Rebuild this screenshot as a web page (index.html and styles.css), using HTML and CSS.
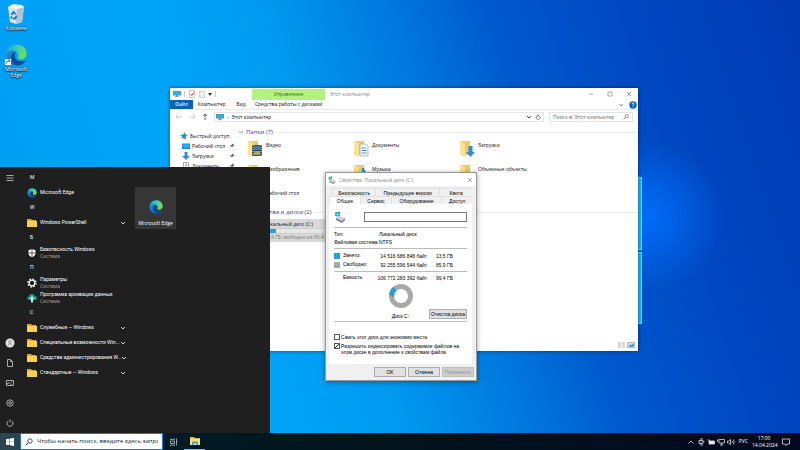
FILE: index.html
```html
<!DOCTYPE html>
<html lang="ru">
<head>
    <meta charset="UTF-8">
    <meta name="viewport" content="width=device-width, initial-scale=1.0">
    <title>Рабочий стол</title>
    <link rel="stylesheet" href="styles.css">
</head>
<body>
    <!-- shared icons -->
    <svg class="sprite" aria-hidden="true">
        <defs>
            <linearGradient id="edge-top" x1="0" y1="0" x2="1" y2="0.3">
                <stop offset="0" stop-color="#1ba0df"/>
                <stop offset="0.5" stop-color="#33c5c8"/>
                <stop offset="1" stop-color="#68df56"/>
            </linearGradient>
            <linearGradient id="edge-bottom" x1="0" y1="0" x2="1" y2="1">
                <stop offset="0" stop-color="#1f95e0"/>
                <stop offset="1" stop-color="#0c4fa3"/>
            </linearGradient>
        </defs>
        <symbol id="edge" viewBox="0 0 24 24">
            <path fill="url(#edge-bottom)" d="M1 11C1 18 6 23.500 13 23.500c4.500 0 8-2.500 9.700-5.500-4 2-11 1.500-12-4-.5-3 1-5 1.500-5.500C9 5 2 6 1 11z"/>
            <path fill="#0a4a98" d="M8 10c-3 6 1 13 7.500 13.200 3.200-.7 5.700-2.700 7.200-5.200-4 2-11 1.500-12-4-.4-2 .3-3.600 1-4.700z"/>
            <path fill="url(#edge-top)" d="M1 11C2 4 7 .5 12.500.500 19 .5 23.500 5 23.500 10.500c0 4-3 6-6.500 6-2.500 0-3.500-1-3-1.800 1.500-2 .8-5.700-3-7.200C6.500 6 2 8 1 11z"/>
        </symbol>
        <symbol id="folder" viewBox="0 0 10 8">
            <path fill="#e8a80c" d="M0 0h4l1 1h4v7H0z"/>
            <path fill="#ffd04d" d="M0 2h10v6H0z"/>
        </symbol>
        <symbol id="big-folder" viewBox="0 0 18 18">
            <path fill="#efcb66" d="M2 1h10v14H2z"/>
            <path fill="#fbe392" d="M2 1l5 2v14l-5-2z"/>
        </symbol>
        <symbol id="chevron" viewBox="0 0 6 6">
            <path fill="none" stroke="currentColor" stroke-width="0.800" d="M1 2l2 2 2-2"/>
        </symbol>
        <symbol id="close" viewBox="0 0 6 6">
            <path fill="none" stroke="currentColor" stroke-width="0.700" d="M1 1l4 4M5 1L1 5"/>
        </symbol>
        <symbol id="monitor" viewBox="0 0 10 8">
            <path fill="#6d8ca4" d="M0 0h10v6H6v1h2v1H2V7h2V6H0z"/>
            <path fill="#27b1f3" d="M1 1h8v4H1z"/>
        </symbol>
        <symbol id="drive" viewBox="0 0 12 12">
            <path fill="#00a4df" d="M1 1.500l2-.4v2H1zM3.400 1L6 .5v2.600H3.400zM1 3.500h2v2l-2-.4zM3.400 3.500H6v2.600l-2.600-.5z"/>
            <path fill="#d3d6d8" d="M2 7l3-2 6 2-3 3z"/>
            <path fill="#7a8084" d="M2 7l6 3v2L2 9zM8 10l3-3v2l-3 3z"/>
        </symbol>
        <symbol id="search" viewBox="0 0 8 8">
            <circle cx="5" cy="3" r="2.200" fill="none" stroke="currentColor" stroke-width="0.800"/>
            <path stroke="currentColor" stroke-width="0.900" d="M3.400 4.600L.8 7.200"/>
        </symbol>
        <symbol id="pin" viewBox="0 0 6 6">
            <path fill="#666" d="M3.500.5l2 2-1.500.500-.5 1.500-1-1L.6 5.400l1.400-2-1-1L2.600 2z"/>
        </symbol>
        <symbol id="down" viewBox="0 0 8 8">
            <path fill="#2f8ddb" d="M2.500 0h3v4H8L4 8 0 4h2.500z"/>
        </symbol>
        <symbol id="gear" viewBox="0 0 10 10">
            <circle cx="5" cy="5" r="2.800" fill="none" stroke="currentColor" stroke-width="1.200"/>
            <circle cx="5" cy="5" r="4" fill="none" stroke="currentColor" stroke-width="1.300" stroke-dasharray="1.600 1.540"/>
        </symbol>
    </svg>

    <main class="desktop">
        <div class="wall-logo"><span></span><span></span><span></span><span></span></div>

        <nav class="shortcuts">
            <a href="#bin" class="shortcut">
                <svg class="shortcut-icon" viewBox="0 0 22 22">
                    <path fill="#d9e4ea" d="M3 4l12-2 4 2-2 15-6 2-6-2z"/>
                    <path fill="#b3c4cf" d="M12 6l7-2-2 15-6 2z"/>
                    <path fill="#f5fafc" d="M3 4l5-3 9 1 2 2-7 2z"/>
                    <path fill="none" stroke="#1478c8" stroke-width="1.800" d="M6.500 12l2-3 2 2M11.500 12.500l-1 3H8M7 15.500l-1-2"/>
                </svg>
                <span>Корзина</span>
            </a>
            <a href="#edge" class="shortcut">
                <svg class="shortcut-icon" viewBox="0 0 22 22">
                    <use href="#edge" width="22" height="22"/>
                    <path fill="#fff" d="M0 15h6v6H0z"/>
                    <path fill="none" stroke="#1464b4" d="M1.500 19.500c0-2 1-2.500 3-2.500M3 16h1.600v2"/>
                </svg>
                <span>Microsoft Edge</span>
            </a>
        </nav>

        <section class="explorer" aria-label="Этот компьютер">
            <header class="ex-title">
                <div class="quick-access">
                    <svg class="i8" viewBox="0 0 10 10"><use href="#monitor" y="1" width="10" height="8"/></svg>
                    <i class="sep"></i>
                    <svg class="i8" viewBox="0 0 8 8"><path fill="#fff" stroke="#a9a9a9" stroke-width="0.600" d="M1.500.5h5v7h-5z"/><path fill="none" stroke="#d33" d="M2.500 4l1.200 1.500L6 2.500"/></svg>
                    <svg class="i8" viewBox="0 0 8 8"><path fill="#eee" stroke="#bbb" stroke-width="0.600" d="M1.500 1.500h5v6h-5z"/></svg>
                    <svg class="i4" viewBox="0 0 4 4"><path fill="#333" d="M0 1h4L2 4z"/></svg>
                    <i class="sep"></i>
                </div>
                <span class="context-tab">Управление</span>
                <span class="ex-name">Этот компьютер</span>
                <div class="win-buttons">
                    <button aria-label="Свернуть"><svg viewBox="0 0 6 6"><path stroke="#888" stroke-width="0.700" d="M1 3h4"/></svg></button>
                    <button aria-label="Развернуть"><svg viewBox="0 0 6 6"><path fill="none" stroke="#888" stroke-width="0.700" d="M1 1h4v4H1z"/></svg></button>
                    <button aria-label="Закрыть"><svg><use href="#close"/></svg></button>
                </div>
            </header>
            <nav class="ribbon">
                <a href="#file" class="file">Файл</a>
                <a href="#computer" class="tab-computer">Компьютер</a>
                <a href="#view" class="tab-view">Вид</a>
                <a href="#tools" class="tab-tools">Средства работы с дисками</a>
                <svg class="i6 ribbon-toggle"><use href="#chevron"/></svg>
                <svg class="i8" viewBox="0 0 8 8"><circle cx="4" cy="4" r="3.700" fill="#0560b0"/><path fill="none" stroke="#fff" stroke-width="0.900" d="M2.800 3c.2-1.500 2.500-1.300 2.300 0-.1.800-1.100.800-1.100 1.800M4 5.500v.9"/></svg>
            </nav>
            <div class="address-row">
                <div class="arrows">
                    <svg class="i8 off" viewBox="0 0 8 8"><path d="M7 4H1l2-2M1 4l2 2"/></svg>
                    <svg class="i8 off" viewBox="0 0 8 8"><path d="M1 4h6L5 2M7 4L5 6"/></svg>
                    <svg class="i8" viewBox="0 0 8 8"><path d="M4 7V1L2 3M4 1l2 2"/></svg>
                </div>
                <div class="address">
                    <svg class="i8" viewBox="0 0 10 8"><use href="#monitor" width="10" height="8"/></svg>
                    <span class="crumb">›</span>
                    <span>Этот компьютер</span>
                    <svg class="i6 push"><use href="#chevron"/></svg>
                    <svg class="i6" viewBox="0 0 6 6"><path fill="none" stroke="#444" stroke-width="0.700" d="M4.500 2A2 2 0 1 1 2 1.700M2 .5L3.500 1.500 2 2.700"/></svg>
                </div>
                <label class="ex-search">
                    <input type="text" placeholder="Поиск в: Этот компьютер" aria-label="Поиск">
                    <svg class="i6"><use href="#search"/></svg>
                </label>
            </div>
            <div class="ex-body">
                <ul class="tree">
                    <li><svg class="i8" viewBox="0 0 8 8"><path fill="#258be0" d="M4.500 0l.8 2.600L8 3 5.800 4.600 6 8 3.900 6 1.500 7l.7-2.500L0 3l3-.3z"/></svg><span>Быстрый доступ</span></li>
                    <li class="sub"><svg class="i8" viewBox="0 0 8 8"><path fill="#1689dc" d="M0 1.500h8v5.500H0z"/><path fill="#38adf5" d="M1 2.500h6v3H1z"/></svg><span>Рабочий стол</span><svg class="i6 push"><use href="#pin"/></svg></li>
                    <li class="sub"><svg class="i8"><use href="#down"/></svg><span>Загрузки</span><svg class="i6 push"><use href="#pin"/></svg></li>
                    <li class="sub"><svg class="i8" viewBox="0 0 8 8"><path fill="#fff" stroke="#6f8697" stroke-width="0.700" d="M1.500.5h5v7h-5zM3 2.500h2M3 4h2M3 5.500h2"/></svg><span>Документы</span><svg class="i6 push"><use href="#pin"/></svg></li>
                </ul>
                <div class="content">
                    <h2><svg class="i6"><use href="#chevron"/></svg>Папки (7)</h2>
                    <ul class="folders">
                        <li><svg class="i18" viewBox="0 0 18 18"><use href="#big-folder"/><path fill="#43464b" d="M6 5h10v11H6z"/><path fill="#4377bb" d="M8 6h6v4H8z"/><path fill="#9aa86b" d="M8 11h6v4H8z"/><path stroke="#ddd" stroke-dasharray="1 1" d="M7 5v11M15 5v11"/></svg><span>Видео</span></li>
                        <li><svg class="i18" viewBox="0 0 18 18"><use href="#big-folder"/><path fill="#f3f8fb" stroke="#8fa3b0" stroke-width="0.700" d="M8 4h6l2 2v10H8z"/><path stroke="#4a90c8" d="M9.500 8h4M9.500 10.500h5M9.500 13h5"/></svg><span>Документы</span></li>
                        <li><svg class="i18" viewBox="0 0 18 18"><use href="#big-folder"/><path fill="#2f8ddb" d="M10.500 6h4v6H17l-4.500 5L8 12h2.500z"/></svg><span>Загрузки</span></li>
                        <li><svg class="i18" viewBox="0 0 18 18"><use href="#big-folder"/><path fill="#5fb2e5" d="M7 7h9v8H7z"/></svg><span>Изображения</span></li>
                        <li><svg class="i18" viewBox="0 0 18 18"><use href="#big-folder"/><path fill="#0b94d8" d="M10 4h2c0 3 4 4 3 8-1-2-2-2-3-2v5h-2z"/></svg><span>Музыка</span></li>
                        <li><svg class="i18" viewBox="0 0 18 18"><use href="#big-folder"/><path fill="#35aee0" d="M12 8l4 2v4l-4 2-4-2v-4z"/></svg><span>Объемные объекты</span></li>
                        <li><svg class="i18" viewBox="0 0 18 18"><use href="#big-folder"/></svg><span>Рабочий стол</span></li>
                    </ul>
                    <h2><svg class="i6"><use href="#chevron"/></svg>Устройства и диски (2)</h2>
                    <div class="disk">
                        <svg class="i18"><use href="#drive"/></svg>
                        <div class="disk-info">
                            <span>Локальный диск (C:)</span>
                            <div class="disk-bar"><div style="width: 14%"></div></div>
                            <span class="muted">85,9 ГБ свободно из 99,4 ГБ</span>
                        </div>
                    </div>
                </div>
            </div>
            <footer class="ex-status">
                <svg class="i8" viewBox="0 0 8 8"><path stroke="#999" stroke-width="0.800" stroke-dasharray="3 1" d="M0 2h8M0 4h8M0 6h8"/></svg>
                <svg class="i8" viewBox="0 0 8 8"><path fill="#cde6f7" stroke="#6ea7cf" stroke-width="0.700" d="M.5 1.500h7v5h-7z"/><path fill="#2873a8" d="M1.500 5.500l2-2 1 1 2-2v3z"/></svg>
            </footer>
        </section>

        <section class="dialog" aria-label="Свойства">
            <header class="dlg-title">
                <svg class="i8" viewBox="0 0 12 12"><use href="#drive"/></svg>
                <span>Свойства: Локальный диск (C:)</span>
                <button aria-label="Закрыть"><svg class="i6"><use href="#close"/></svg></button>
            </header>
            <div class="tabs">
                <div class="tab-row back">
                    <button class="grow-4">Безопасность</button>
                    <button class="grow-6">Предыдущие версии</button>
                    <button class="grow-3">Квота</button>
                </div>
                <div class="tab-row">
                    <button class="active">Общие</button>
                    <button class="grow-3">Сервис</button>
                    <button class="grow-5">Оборудование</button>
                    <button class="grow-3">Доступ</button>
                </div>
            </div>
            <div class="panel">
                <div class="volume">
                    <svg class="i12"><use href="#drive"/></svg>
                    <input type="text" aria-label="Метка тома">
                </div>
                <dl class="facts">
                    <dt>Тип:</dt><dd>Локальный диск</dd>
                    <dt>Файловая система:</dt><dd>NTFS</dd>
                </dl>
                <table class="space">
                    <tr><th><i class="used"></i>Занято:</th><td>14 516 686 848 байт</td><td>13,5 ГБ</td></tr>
                    <tr><th><i class="free"></i>Свободно:</th><td>92 255 596 544 байт</td><td>85,9 ГБ</td></tr>
                </table>
                <table class="space total">
                    <tr><th><i></i>Емкость:</th><td>106 772 283 392 байт</td><td>99,4 ГБ</td></tr>
                </table>
                <div class="chart">
                    <figure>
                        <svg class="donut" viewBox="0 0 24 24">
                            <circle cx="12" cy="12" r="9.500" fill="none" stroke="#a8a8a8" stroke-width="5"/>
                            <circle cx="12" cy="12" r="9.500" fill="none" stroke="#26a0da" stroke-width="5" pathLength="100" stroke-dasharray="14 86" stroke-dashoffset="-50"/>
                        </svg>
                        <figcaption>Диск C:</figcaption>
                    </figure>
                    <button class="btn">Очистка диска</button>
                </div>
                <div class="options">
                    <label><input type="checkbox"><span>Сжать этот диск для экономии места</span></label>
                    <label><input type="checkbox" checked><span>Разрешить индексировать содержимое файлов на этом диске в дополнение к свойствам файла</span></label>
                </div>
            </div>
            <footer class="dlg-buttons">
                <button class="btn">OK</button>
                <button class="btn">Отмена</button>
                <button class="btn" disabled>Применить</button>
            </footer>
        </section>

        <section class="start-menu" aria-label="Пуск">
            <nav class="rail">
                <button class="burger" aria-label="Меню"><svg class="i8" viewBox="0 0 8 8"><path d="M.5 1.500h7M.5 4h7M.5 6.500h7"/></svg></button>
                <button aria-label="Пользователь"><svg class="i10" viewBox="0 0 10 10"><circle cx="5" cy="5" r="4.500" fill="#e6e6e6" stroke="none"/><circle cx="5" cy="4" r="1.500" stroke="#888"/><path stroke="#888" d="M2.800 8c.3-3 4.100-3 4.400 0"/></svg></button>
                <button aria-label="Документы"><svg class="i8" viewBox="0 0 8 8"><path d="M1.500.5h3l2 2v5h-5zM4.500.5v2h2"/></svg></button>
                <button aria-label="Изображения"><svg class="i8" viewBox="0 0 8 8"><path d="M.5 1.500h7v5h-7zM.5 5.500L3 3.500l3 3"/><path d="M5 3h1"/></svg></button>
                <button aria-label="Параметры"><svg class="i8" viewBox="0 0 8 8"><circle cx="4" cy="4" r="3.200"/><circle cx="4" cy="4" r="1.300"/></svg></button>
                <button aria-label="Выключение"><svg class="i8" viewBox="0 0 8 8"><path d="M2.300 1.800a3 3 0 1 0 3.400 0M4 .5v3"/></svg></button>
            </nav>
            <ul class="apps">
                <li class="letter">M</li>
                <li><svg class="i10"><use href="#edge"/></svg><span>Microsoft Edge</span></li>
                <li class="letter">W</li>
                <li><svg class="i10"><use href="#folder"/></svg><span>Windows PowerShell</span><svg class="i6 push"><use href="#chevron"/></svg></li>
                <li class="letter">Б</li>
                <li><svg class="i10" viewBox="0 0 10 10"><path fill="#fff" d="M5 1l3.500 1.200V5c0 2-1.500 3.500-3.500 4.300C3 8.500 1.500 7 1.500 5V2.200z"/><path stroke="#1f1f1f" stroke-width="0.700" d="M5 1v8M1.500 5h7"/></svg><span>Безопасность Windows<small>Система</small></span></li>
                <li class="letter">П</li>
                <li><svg class="i10"><use href="#gear"/></svg><span>Параметры<small>Система</small></span></li>
                <li><svg class="i10" viewBox="0 0 10 10"><path fill="#16a58a" d="M2.500 7C-.5 7-.2 3.700 2 3.500 2.500.5 7 .2 7.800 3.200 10.500 3.200 10.500 7 8 7z"/><path fill="#b9f3e4" d="M5 3l2.500 3H6v3.500H4V6H2.500z"/></svg><span>Программа архивации данных<small>Система</small></span></li>
                <li class="letter">С</li>
                <li><svg class="i10"><use href="#folder"/></svg><span>Служебные — Windows</span><svg class="i6 push"><use href="#chevron"/></svg></li>
                <li><svg class="i10"><use href="#folder"/></svg><span>Специальные возможности Win...</span><svg class="i6 push"><use href="#chevron"/></svg></li>
                <li><svg class="i10"><use href="#folder"/></svg><span>Средства администрирования W...</span><svg class="i6 push"><use href="#chevron"/></svg></li>
                <li><svg class="i10"><use href="#folder"/></svg><span>Стандартные — Windows</span><svg class="i6 push"><use href="#chevron"/></svg></li>
            </ul>
            <div class="tiles">
                <a href="#edge" class="tile">
                    <svg><use href="#edge"/></svg>
                    <span>Microsoft Edge</span>
                </a>
            </div>
        </section>
    </main>

    <footer class="taskbar">
        <button class="start" aria-label="Пуск"><svg class="i8" viewBox="0 0 8 8"><path fill="#fff" d="M0 1.200L3.600.7v3H0zM4 .6L8 0v3.700H4zM0 4.100h3.600v3L0 6.700zM4 4.100h4V8l-4-.7z"/></svg></button>
        <label class="task-search">
            <svg class="i8"><use href="#search"/></svg>
            <input type="text" placeholder="Чтобы начать поиск, введите здесь запрос" aria-label="Поиск">
        </label>
        <button class="task" aria-label="Представление задач"><svg class="i8" viewBox="0 0 8 8"><path fill="none" stroke="#a9c4c9" stroke-width="0.800" d="M.5.500v1h4v-1M.5 3h4v2.500h-4zM.5 8V7h4v1M6.500.5v7M6 3.500h1.500"/></svg></button>
        <button class="task open" aria-label="Проводник"><svg class="i10" viewBox="0 0 10 10"><path fill="#e9b93a" d="M0 1h4l1 1h5v7H0z"/><path fill="#ffe07c" d="M0 3h10v6H0z"/><path fill="#3aa0df" d="M2 5.500h6V9H6.500V7.500h-3V9H2z"/></svg></button>
        <div class="tray">
            <svg class="i8" viewBox="0 0 8 8"><path d="M1.500 5.500L4 3l2.500 2.500"/></svg>
            <svg class="i8" viewBox="0 0 8 8"><path d="M2 2.500h4v3H2zM3 1h3M3 7h3M4 3.500v1M6 3.500h1.500"/></svg>
            <svg class="i8" viewBox="0 0 8 8"><path fill="#eee" d="M2 3h5.500v3H2z"/><path d="M.5 2h2v2"/></svg>
            <svg class="i8" viewBox="0 0 8 8"><path d="M2 1.500h5.500V5H2zM4.500 5v2M3 7h3M.5 1.500V4"/></svg>
            <svg class="i8" viewBox="0 0 8 8"><path d="M.5 3h1L3.500 1.500v5L1.500 5h-1zM5 3q.8 1 0 2M6.300 1.500q2 2.500 0 5"/></svg>
            <span class="lang">РУС</span>
            <time class="clock">17:00<br>14.04.2024</time>
            <svg class="i8" viewBox="0 0 8 8"><path d="M.5 1h7v5H5L4 7.500 3 6H.5z"/></svg>
        </div>
    </footer>
</body>
</html>
```

FILE: styles.css
```css
* {
    box-sizing: border-box;
}

body {
    margin: 0;
    height: 100vh;
    display: flex;
    flex-direction: column;
    overflow: hidden;
    font-family: "Open Sans", "Noto Sans", sans-serif;
    font-size: 5px;
    line-height: 7px;
    color: #111;
}

ul, dl, dd, figure, h2 {
    margin: 0;
    padding: 0;
    list-style: none;
}

button, input {
    font: inherit;
    color: inherit;
    margin: 0;
    padding: 0;
    border: 0;
    background: none;
}

button {
    display: flex;
    align-items: center;
    justify-content: center;
}

a {
    color: inherit;
    text-decoration: none;
}

svg {
    display: block;
    flex: none;
}

.sprite {
    position: absolute;
    width: 0;
    height: 0;
}

.i4 { width: 4px; height: 4px; }
.i6 { width: 6px; height: 6px; }
.i8 { width: 8px; height: 8px; }
.i10 { width: 10px; height: 10px; }
.i12 { width: 12px; height: 12px; }
.i18 { width: 18px; height: 18px; }

.push {
    margin-left: auto;
}

/* desktop */
.desktop {
    flex: 1;
    min-height: 0;
    position: relative;
    background:
        radial-gradient(circle at 81% 50%, rgba(0, 112, 255, 0.9), rgba(0, 100, 245, 0) 75px),
        linear-gradient(72deg, #009cf2 0%, #00a5f9 30%, #0099f0 43%, #0076dc 57%, #0058cc 67%, #0046c0 83%, #003ab2 100%);
}

.wall-logo {
    position: absolute;
    top: 177px;
    right: 158px;
    width: 150px;
    height: 147px;
    display: grid;
    grid-template-columns: 1fr 1fr;
    gap: 2px;
}

.wall-logo span {
    background: #18b4ff;
    border: 1px solid #5ee0ff;
}

.shortcuts {
    position: absolute;
    top: 3px;
    left: 1px;
    width: 30px;
    display: flex;
    flex-direction: column;
    gap: 13px;
}

.shortcut {
    display: flex;
    flex-direction: column;
    align-items: center;
    text-align: center;
    line-height: 6px;
    color: #fff;
    text-shadow: 0 1px 1px #000, 0 0 2px #000;
}

.shortcut-icon {
    width: 22px;
    height: 22px;
}

/* explorer window */
.explorer {
    position: absolute;
    top: 88px;
    right: 162px;
    bottom: 82px;
    left: 170px;
    display: flex;
    flex-direction: column;
    background: #fff;
    box-shadow: 0 0 4px rgba(0, 0, 0, 0.5);
}

.ex-title {
    display: flex;
    height: 12px;
}

.quick-access {
    width: 82px;
    display: flex;
    align-items: center;
    gap: 2px;
    padding-left: 3px;
}

.sep {
    width: 1px;
    height: 6px;
    margin: 0 1px;
    background: #ccc;
}

.context-tab {
    width: 73px;
    margin-top: 1px;
    line-height: 11px;
    text-align: center;
    background: #b5f085;
    color: #3e6b2b;
}

.ex-name {
    padding-left: 5px;
    line-height: 12px;
    color: #888;
}

.win-buttons {
    margin-left: auto;
    display: flex;
    color: #777;
}

.win-buttons button {
    width: 19px;
}

.win-buttons svg {
    width: 6px;
    height: 6px;
}

.ribbon {
    display: flex;
    align-items: center;
    height: 10px;
    line-height: 9px;
    border-bottom: 1px solid #e8e8e8;
}

.file {
    width: 23px;
    text-align: center;
    background: #0a63b1;
    color: #fff;
}

.tab-computer {
    width: 37px;
    text-align: center;
}

.tab-view {
    width: 22px;
    text-align: center;
}

.tab-tools {
    width: 73px;
    text-align: center;
    white-space: nowrap;
    background: #fafafa;
}

.ribbon-toggle {
    margin-left: auto;
    margin-right: 5px;
    color: #777;
}

.ribbon svg:last-child {
    margin-right: 1px;
}

.address-row {
    display: flex;
    align-items: center;
    gap: 5px;
    height: 14px;
    padding: 2px 5px;
}

.arrows {
    display: flex;
    gap: 5px;
}

.arrows svg {
    fill: none;
    stroke: #444;
    stroke-width: 0.8;
}

.arrows .off {
    stroke: #c4c4c4;
}

.address {
    flex: 1;
    height: 10px;
    display: flex;
    align-items: center;
    gap: 3px;
    padding: 0 2px 0 1px;
    border: 1px solid #e4e4e4;
}

.ex-search {
    width: 84px;
    height: 10px;
    display: flex;
    align-items: center;
    padding: 0 3px;
    border: 1px solid #e4e4e4;
    color: #555;
}

.ex-search input {
    flex: 1;
    min-width: 0;
}

input::placeholder {
    color: #666;
    opacity: 1;
}

.ex-body {
    flex: 1;
    min-height: 0;
    display: flex;
}

.tree {
    width: 68px;
    padding: 7px 3px 0 10px;
}

.tree li {
    display: flex;
    align-items: center;
    gap: 2px;
    height: 10px;
    white-space: nowrap;
}

.tree .sub {
    padding-left: 2px;
}

.content {
    flex: 1;
    min-width: 0;
    padding-top: 1px;
    overflow: hidden;
}

.content h2 {
    display: flex;
    align-items: center;
    gap: 2px;
    height: 14px;
    font-size: 6px;
    font-weight: normal;
    color: #2a4687;
    white-space: nowrap;
}

.content h2::after {
    content: "";
    flex: 1;
    height: 1px;
    background: #ececec;
}

.content h2 svg {
    color: #888;
}

.folders {
    display: grid;
    grid-template-columns: repeat(auto-fill, 106px);
    grid-template-rows: 24px 24px 17px;
    padding: 1px 0 0 8px;
}

.folders li {
    display: flex;
    gap: 2px;
    white-space: nowrap;
}

.folders span {
    padding-top: 2px;
}

.disk {
    width: 100px;
    height: 23px;
    margin-left: 6px;
    display: flex;
    gap: 2px;
    align-items: center;
    background: #d9d9d9;
    white-space: nowrap;
}

.disk-info {
    flex: 1;
    min-width: 0;
}

.disk-info span {
    display: block;
}

.disk-bar {
    height: 6px;
    background: #e6e6e6;
    border: 1px solid #ccc;
}

.disk-bar div {
    height: 100%;
    background: #26a0da;
}

.muted {
    color: #777;
}

.ex-status {
    height: 12px;
    display: flex;
    align-items: center;
    justify-content: flex-end;
    gap: 1px;
    padding-right: 3px;
}

/* disk properties dialog */
.dialog {
    position: absolute;
    top: 173px;
    left: 326px;
    width: 150px;
    background: #f0f0f0;
    box-shadow: 0 0 0 1px #999, 0 1px 5px 1px rgba(0, 0, 0, 0.4);
    font-family: "Liberation Sans", Arial, sans-serif;
    line-height: 6px;
    color: #000;
}

.dlg-title {
    display: flex;
    align-items: center;
    gap: 3px;
    height: 13px;
    padding: 0 3px 0 2px;
    background: #fff;
    font-family: "Open Sans", "Noto Sans", sans-serif;
    color: #888;
}

.dlg-title button {
    margin-left: auto;
}

.tabs {
    padding: 2px 4px 0 3px;
}

.tab-row {
    display: flex;
}

.tab-row.back {
    padding: 0 0 0 3px;
}

.tab-row button {
    height: 8px;
    border: 1px solid #e0e0e0;
    border-bottom: 0;
    border-right: 0;
    white-space: nowrap;
}

.tab-row button.active {
    width: 31px;
    background: #fff;
}

.grow-3 { flex: 3 1 0; }
.grow-4 { flex: 4 1 0; }
.grow-5 { flex: 5 1 0; }
.grow-6 { flex: 6 1 0; }

.panel {
    margin: 0 4px 0 3px;
    padding: 7px 5px 9px;
    background: #fff;
}

.volume {
    display: flex;
    align-items: center;
    justify-content: space-between;
    padding-bottom: 4px;
    border-bottom: 1px solid #bbb;
}

.volume input {
    width: 103px;
    height: 10px;
    border: 1px solid #777;
}

.facts {
    display: grid;
    grid-template-columns: 45px 1fr;
    grid-auto-rows: 8px;
    align-items: center;
    padding: 2px 0;
    border-bottom: 1px solid #bbb;
    white-space: nowrap;
}

.space {
    width: 100%;
    padding: 2px 0;
    border-spacing: 0;
    border-bottom: 1px solid #bbb;
    white-space: nowrap;
}

.space th, .space td {
    height: 9px;
    padding: 0;
}

.space th {
    width: 43px;
    font-weight: normal;
    text-align: left;
}

.space td {
    width: 50px;
    text-align: right;
}

.space td:last-child {
    width: auto;
    padding-right: 14px;
}

.space i {
    display: inline-block;
    width: 6px;
    height: 6px;
    margin-right: 3px;
    vertical-align: middle;
}

.used { background: #26a0da; }
.free { background: #a8a8a8; }

.total {
    padding: 1px 0;
    border-bottom: 0;
}

.chart {
    display: grid;
    grid-template-columns: 1fr auto 1fr;
    align-items: end;
    padding: 1px 0 2px;
    border-bottom: 1px solid #bbb;
}

.chart figure {
    grid-column: 2;
    text-align: center;
}

.donut {
    width: 24px;
    height: 24px;
}

.chart figcaption {
    padding-top: 5px;
}

.chart .btn {
    justify-self: end;
    width: 38px;
}

.btn {
    width: 32px;
    height: 10px;
    background: #e1e1e1;
    border: 1px solid #adadad;
    white-space: nowrap;
}

.btn:disabled {
    background: #ccc;
    border-color: #bfbfbf;
    color: #999;
}

.options {
    display: flex;
    flex-direction: column;
    gap: 3px;
    padding-top: 12px;
}

.options label {
    display: flex;
    gap: 1px;
}

.options input {
    appearance: none;
    flex: none;
    width: 6px;
    height: 6px;
    border: 1px solid #555;
    background: #fff;
}

.options input:checked {
    background: linear-gradient(135deg, #fff 40%, #333 40%, #333 60%, #fff 60%);
}

.dlg-buttons {
    display: flex;
    justify-content: flex-end;
    gap: 2px;
    padding: 3px 2px 3px;
}

/* start menu */
.start-menu {
    position: absolute;
    top: 167px;
    bottom: 0;
    left: 0;
    width: 270px;
    display: flex;
    padding-top: 3px;
    background: #1f1f1f;
    color: #fff;
}

.rail {
    width: 20px;
    display: flex;
    flex-direction: column;
}

.rail button {
    height: 20px;
}

.rail .burger {
    height: 15px;
    margin-bottom: auto;
}

.rail svg {
    fill: none;
    stroke: #ccc;
    stroke-width: 0.8;
}

.apps {
    width: 106px;
    padding-left: 7px;
    font-family: Roboto, "Noto Sans", sans-serif;
}

.apps li {
    display: flex;
    align-items: center;
    height: 15px;
    white-space: nowrap;
}

.apps .i10 {
    margin-right: 3px;
}

.apps small {
    display: block;
    font-size: 5px;
    color: #999;
}

.apps .letter {
    padding-left: 3px;
}

.tiles {
    padding: 17px 0 0 9px;
}

.tile {
    width: 41px;
    height: 42px;
    display: flex;
    flex-direction: column;
    align-items: center;
    justify-content: flex-end;
    gap: 6px;
    padding-bottom: 2px;
    background: #363636;
    white-space: nowrap;
}

.tile svg {
    width: 14px;
    height: 14px;
}

/* taskbar */
.taskbar {
    flex: none;
    height: 17px;
    display: flex;
    background: linear-gradient(90deg, #04202b, #01131b 50%, #000a1f);
    color: #fff;
}

.start {
    width: 20px;
    background: #2a4550;
}

.task-search {
    width: 143px;
    display: flex;
    align-items: center;
    gap: 4px;
    padding: 0 4px;
    background: #fff;
    border: 1px solid #1a78c8;
    color: #222;
}

.task-search input {
    flex: 1;
    min-width: 0;
    font-size: 6px;
}

.task-search input::placeholder {
    color: #222;
}

.task {
    width: 21px;
}

.open {
    border-bottom: 1px solid #76b9ed;
}

.tray {
    margin-left: auto;
    display: flex;
    align-items: center;
    gap: 2px;
    padding-right: 10px;
}

.tray svg {
    fill: none;
    stroke: #ddd;
    stroke-width: 0.8;
}

.lang {
    padding-left: 2px;
}

.clock {
    width: 24px;
    margin: 0 4px 0 2px;
    text-align: center;
}
```
